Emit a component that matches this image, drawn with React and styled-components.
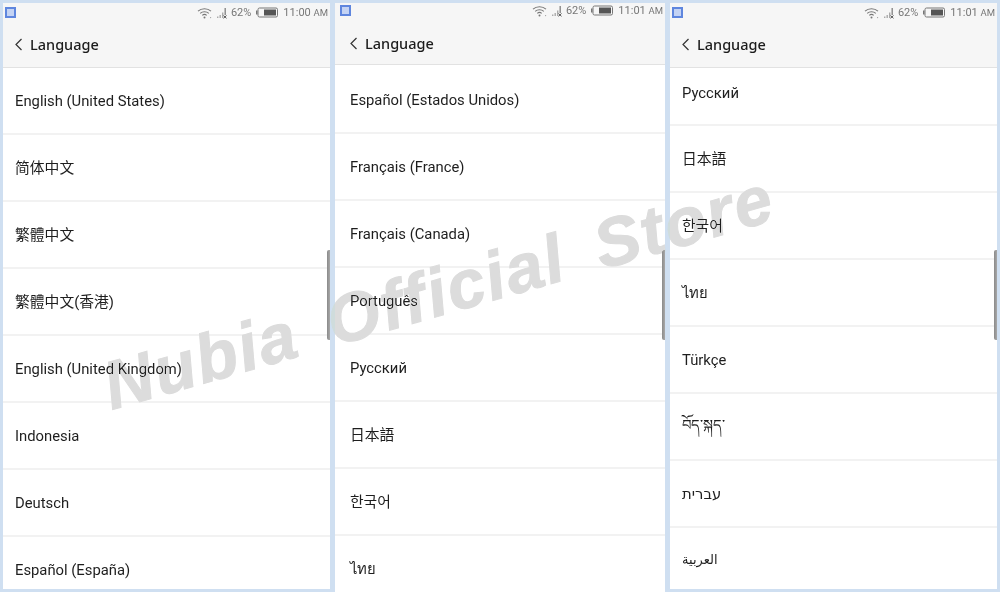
import styled, { createGlobalStyle } from "styled-components";

const GlobalStyle = createGlobalStyle`
  html, body {
    margin: 0;
    padding: 0;
    background: #cfdff1;
    font-family: Roboto, "Noto Sans", "Noto Sans CJK SC", "DejaVu Sans", sans-serif;
  }
`;

const Page = styled.div`
  position: relative;
  width: 1000px;
  height: 592px;
  overflow: hidden;
  background: #cfdff1;
  display: grid;
  grid-template-columns: 327px 330px 327px;
  column-gap: 5px;
  padding: 3px 3px 3px 3px;
  box-sizing: border-box;
`;

const Phone = styled.section`
  position: relative;
  display: flex;
  flex-direction: column;
  overflow: hidden;
  background: #fff;
  margin-bottom: ${(p) => (p.$bleed ? "-3px" : "0")};
`;

const Head = styled.header`
  height: ${(p) => p.$height}px;
  flex: none;
  box-sizing: border-box;
  background: #f6f6f6;
  border-bottom: 1px solid #e2e2e2;
  display: flex;
  flex-direction: column;
`;

const StatusBar = styled.div`
  height: 17px;
  margin-top: ${(p) => p.$top}px;
  padding: 0 2px 0 ${(p) => p.$left}px;
  display: flex;
  align-items: center;
  color: #777;
  font-size: 11px;
`;

const AppBadge = styled.span`
  width: 11px;
  height: 11px;
  box-sizing: border-box;
  border: 2px solid #5f86de;
  background: #c4d3f4;
  margin-right: auto;
`;

const WifiSlot = styled.span`
  display: flex;
  margin-right: 4px;
`;

const Percent = styled.span`
  margin: 0 5px 0 3px;
`;

const Clock = styled.span`
  margin-left: 5px;
`;

const Meridiem = styled.span`
  font-size: 9.5px;
`;

const TitleBar = styled.div`
  flex: 1;
  display: flex;
  align-items: center;
  padding: ${(p) => p.$top}px 0 0 ${(p) => p.$left}px;
  gap: 7px;
`;

const PageTitle = styled.h1`
  margin: 0;
  font-family: "Noto Sans", sans-serif;
  font-size: 14.5px;
  font-weight: 500;
  color: #1c1c1c;
`;

const Rows = styled.ul`
  list-style: none;
  margin: 0;
  padding: 0;
  flex: 1;
  overflow: hidden;
`;

const Row = styled.li`
  height: ${(p) => p.$height || 67}px;
  box-sizing: border-box;
  border-bottom: 2px solid #f2f2f2;
  display: flex;
  align-items: center;
  padding: ${(p) => p.$drop || 0}px 0 ${(p) => p.$lift || 0}px ${(p) => p.$inset}px;
  font-size: ${(p) => p.$size || 14.8}px;
  color: #1e1e1e;
`;

const Scrollbar = styled.i`
  position: absolute;
  right: 0;
  top: 247px;
  width: 3px;
  height: 90px;
  border-radius: 2px 0 0 2px;
  background: linear-gradient(to right, #8a8a8a, #a8a8a8);
`;

// darken keeps the list text black where the watermark crosses it
const Watermark = styled.div`
  position: absolute;
  left: 105px;
  top: 353px;
  transform: rotate(-16deg);
  transform-origin: left center;
  font-family: "Liberation Sans", sans-serif;
  font-style: italic;
  font-weight: 700;
  font-size: 68px;
  line-height: 1;
  letter-spacing: 2px;
  word-spacing: 12px;
  white-space: nowrap;
  color: #dcdcdc;
  -webkit-text-stroke: 1px #dcdcdc;
  mix-blend-mode: darken;
  pointer-events: none;
`;

function WifiIcon() {
  return (
    <svg width="15" height="12" viewBox="0 0 15 12" fill="none" stroke="#777" strokeWidth="1.1">
      <path d="M1 4.2C4.6 .9 10.4 .9 14 4.2" />
      <path d="M3.2 6.3C5.6 4.2 9.4 4.2 11.8 6.3" />
      <path d="M5.3 8.3C6.6 7.2 8.4 7.2 9.7 8.3" />
      <circle cx="7.5" cy="10.4" r="1" fill="#777" stroke="none" />
      <circle cx="13.6" cy="10.6" r=".6" fill="#999" stroke="none" />
    </svg>
  );
}

function SignalIcon() {
  return (
    <svg width="12" height="12" viewBox="0 0 12 12" fill="#aaa">
      <rect x="1" y="9.5" width="1.4" height="1.5" />
      <rect x="3.5" y="8" width="1.4" height="3" />
      <rect x="6" y="5.5" width="1.4" height="5.5" />
      <rect x="8.5" y="1" width="1.4" height="7" fill="#888" />
      <path d="M7.5 8.5l3 2.8M10.5 8.5l-3 2.8" stroke="#555" strokeWidth="1" />
    </svg>
  );
}

function BatteryIcon() {
  return (
    <svg width="22" height="11" viewBox="0 0 22 11" fill="none">
      <rect x="2" y="1" width="19.5" height="9" rx="1.5" stroke="#777" />
      <rect x="0" y="3.5" width="1.5" height="4" fill="#777" />
      <rect x="8" y="2.5" width="12" height="6" fill="#555" />
    </svg>
  );
}

function BackIcon() {
  return (
    <svg width="11" height="14" viewBox="0 0 11 14" fill="none" stroke="#333" strokeWidth="1.2">
      <path d="M9.5 2L4 7.5l5.500 5.500" />
    </svg>
  );
}

const screens = [
  {
    time: "11:00",
    headHeight: 65,
    statusTop: 1,
    statusLeft: 2,
    titleTop: 0,
    titleLeft: 9,
    inset: 12,
    rows: [
      { text: "English (United States)" },
      { text: "简体中文", lift: 2 },
      { text: "繁體中文", lift: 2 },
      { text: "繁體中文(香港)", lift: 2 },
      { text: "English (United Kingdom)" },
      { text: "Indonesia" },
      { text: "Deutsch" },
      { text: "Español (España)" },
    ],
  },
  {
    time: "11:01",
    headHeight: 62,
    statusTop: -1,
    statusLeft: 5,
    titleTop: 2,
    titleLeft: 12,
    inset: 15,
    bleed: true,
    rows: [
      { text: "Español (Estados Unidos)", height: 69, drop: 2 },
      { text: "Français (France)" },
      { text: "Français (Canada)" },
      { text: "Português" },
      { text: "Русский" },
      { text: "日本語", lift: 2 },
      { text: "한국어", lift: 2 },
      { text: "ไทย" },
    ],
  },
  {
    time: "11:01",
    headHeight: 65,
    statusTop: 1,
    statusLeft: 2,
    titleTop: 0,
    titleLeft: 9,
    inset: 12,
    rows: [
      { text: "Русский", height: 58, lift: 6 },
      { text: "日本語", lift: 2 },
      { text: "한국어", lift: 2 },
      { text: "ไทย" },
      { text: "Türkçe" },
      { text: "བོད་སྐད་", drop: 4 },
      { text: "עברית" },
      { text: "العربية", size: 13, lift: 3 },
    ],
  },
];

export default function App() {
  return (
    <Page>
      <GlobalStyle />
      {screens.map((screen, i) => (
        <Phone key={i} $bleed={screen.bleed}>
          <Head $height={screen.headHeight}>
            <StatusBar $top={screen.statusTop} $left={screen.statusLeft}>
              <AppBadge />
              <WifiSlot>
                <WifiIcon />
              </WifiSlot>
              <SignalIcon />
              <Percent>62%</Percent>
              <BatteryIcon />
              <Clock>
                {screen.time} <Meridiem>AM</Meridiem>
              </Clock>
            </StatusBar>
            <TitleBar $top={screen.titleTop} $left={screen.titleLeft}>
              <BackIcon />
              <PageTitle>Language</PageTitle>
            </TitleBar>
          </Head>
          <Rows>
            {screen.rows.map((row) => (
              <Row
                key={row.text}
                $inset={screen.inset}
                $height={row.height}
                $lift={row.lift}
                $drop={row.drop}
                $size={row.size}
              >
                {row.text}
              </Row>
            ))}
          </Rows>
          <Scrollbar />
        </Phone>
      ))}
      <Watermark>Nubia Official Store</Watermark>
    </Page>
  );
}
